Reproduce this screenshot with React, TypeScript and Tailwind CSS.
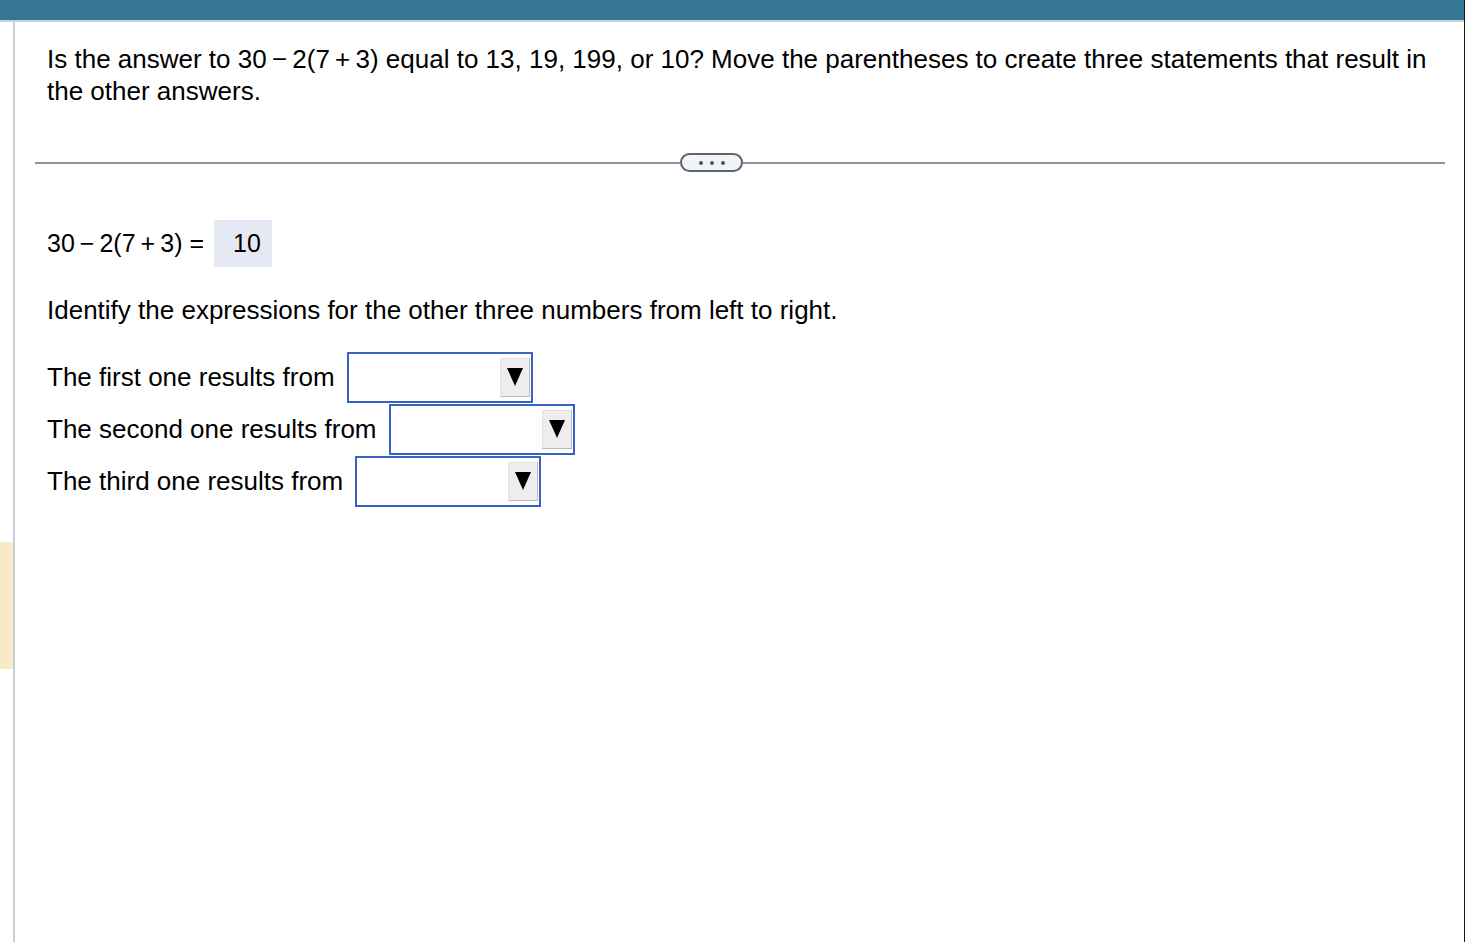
import React from "react";

const Dropdown = () => (
  <div className="w-[186px] h-[51px] border-2 border-[#3a62c6] bg-white flex items-center justify-end pr-[1px] box-border">
    <div className="w-[30px] h-[39px] bg-[#ededed] border border-t-[#e0e0e0] border-l-[#e0e0e0] border-r-[#bdbdbd] border-b-[#bdbdbd] flex items-center justify-center">
      <svg width="16" height="18" viewBox="0 0 16 18">
        <polygon points="0,0 16,0 8,18" fill="#000" />
      </svg>
    </div>
  </div>
);

const rows = [
  "The first one results from",
  "The second one results from",
  "The third one results from",
];

export default function App() {
  return (
    <div className="w-[1466px] h-[942px] overflow-hidden bg-white flex font-['Liberation_Sans',Arial,sans-serif] text-black">
      <div className="flex-1 flex flex-col">
        {/* header bar */}
        <div className="h-[20px] bg-[#357694]" />
        <div className="h-[2px] bg-[#c9d1dc]" />

        <div className="flex flex-1">
          {/* left rail */}
          <div className="w-[13px] flex flex-col">
            <div className="h-[520px]" />
            <div className="h-[127px] bg-[#f7ebc5]" />
          </div>
          <div className="w-[2px] bg-[#c7cedb]" />

          {/* question */}
          <div className="flex-1 pl-[20px] pr-[19px] pt-[21px]">
            <p className="pl-[12px] pr-[10px] text-[26px] leading-[32px]">
              Is the answer to 30{"\u2009"}−{"\u2009"}2(7{"\u2009"}+{"\u2009"}3) equal to 13, 19, 199, or 10? Move the parentheses to create three statements that result in the other answers.
            </p>

            <div className="mt-[46px] h-[19px] flex items-center">
              <div className="w-[645px] h-[2px] bg-[#8c939d]" />
              <div className="w-[63px] h-[19px] rounded-full border-2 border-[#5b6470] bg-[#f3f4f6] flex items-center justify-center gap-[7px]">
                <span className="w-[4px] h-[4px] rounded-full bg-[#4f5661]" />
                <span className="w-[4px] h-[4px] rounded-full bg-[#4f5661]" />
                <span className="w-[4px] h-[4px] rounded-full bg-[#4f5661]" />
              </div>
              <div className="flex-1 h-[2px] bg-[#8c939d]" />
            </div>

            <div className="pl-[12px] mt-[48px] flex items-center text-[25px]">
              <span>30{"\u2009"}−{"\u2009"}2(7{"\u2009"}+{"\u2009"}3) =</span>
              <div className="ml-[10px] w-[58px] h-[47px] bg-[#e4e9f3] flex items-center pl-[19px]">
                10
              </div>
            </div>

            <p className="pl-[12px] mt-[27px] text-[26px] leading-[32px]">
              Identify the expressions for the other three numbers from left to right.
            </p>

            <div className="pl-[12px] mt-[25px] flex flex-col">
              {rows.map((label) => (
                <div key={label} className="flex items-center gap-[12px] h-[52px] text-[26px]">
                  <span>{label}</span>
                  <Dropdown />
                </div>
              ))}
            </div>
          </div>
        </div>
      </div>
      <div className="w-[1px] bg-[#1c1a18]" />
      <div className="w-[1px] bg-white" />
    </div>
  );
}
